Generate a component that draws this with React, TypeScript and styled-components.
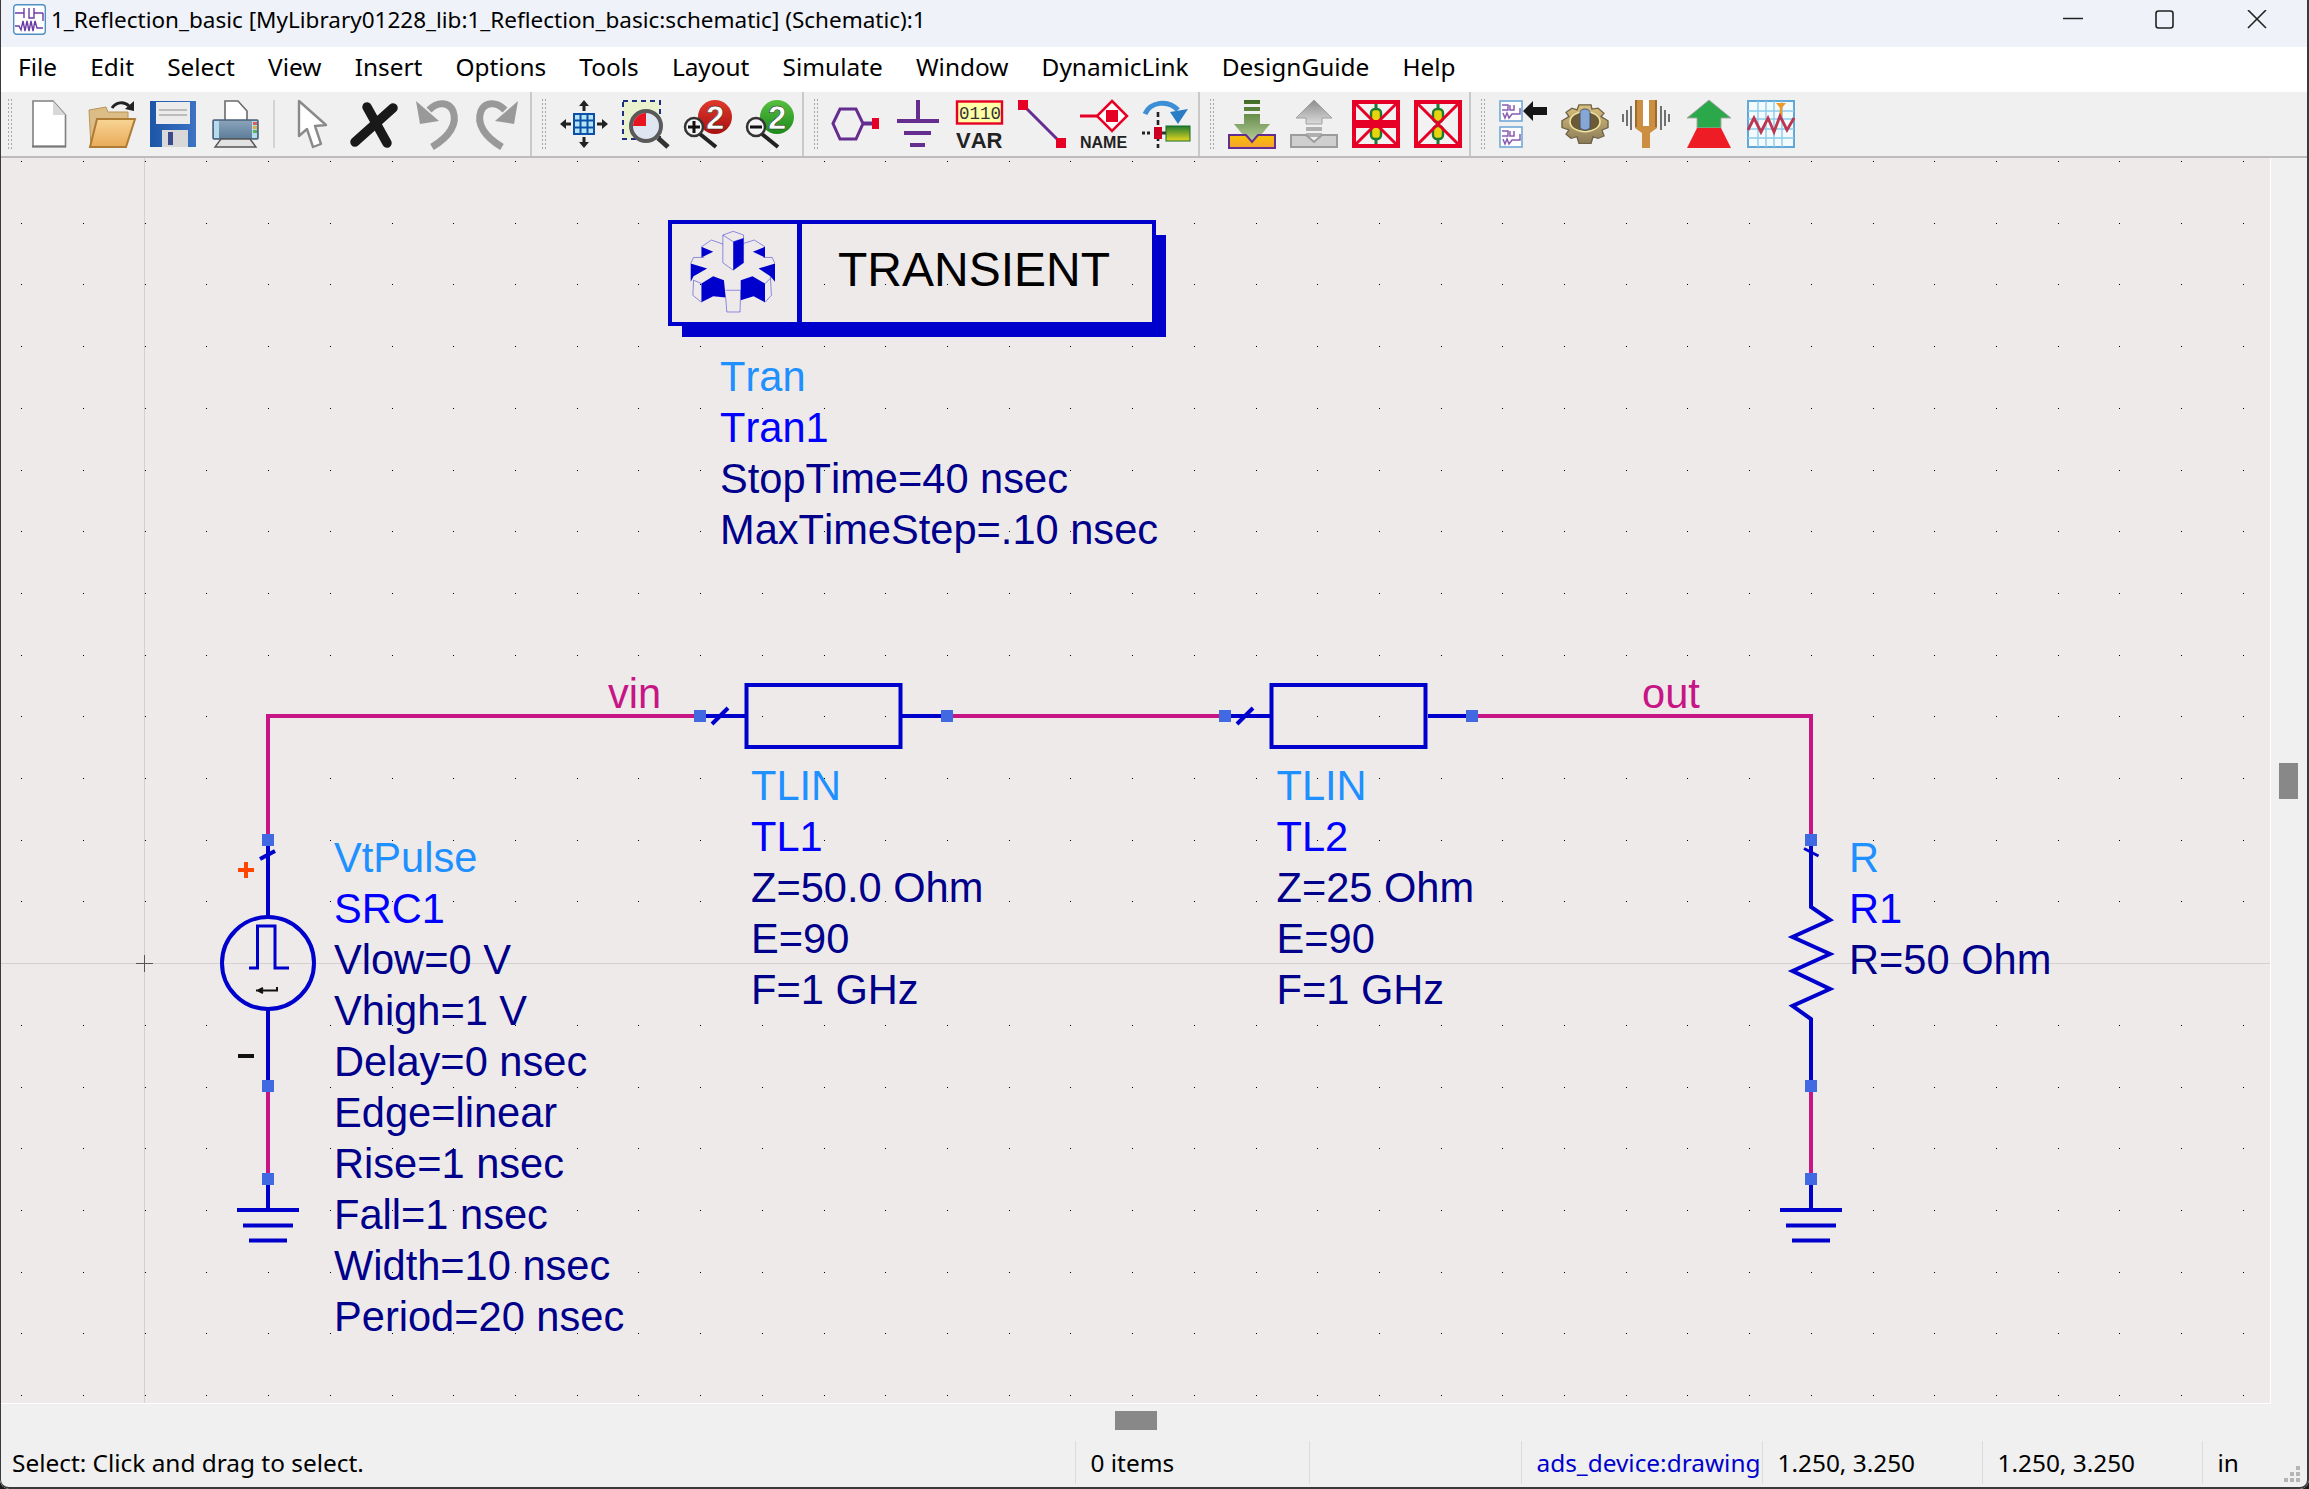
import React from 'react';
import styled, { createGlobalStyle } from 'styled-components';

const GlobalStyle = createGlobalStyle`
  html, body {
    margin: 0;
    padding: 0;
    background: #1c1c1c;
  }
  #root {
    height: 100vh;
  }
`;

const CANVAS_TOP = 158;
const WIRE = '#c71585';
const BLUE = '#0000cd';
const PIN = '#4169e1';
const PURPLE = '#662d91';

const Win = styled.div`
  position: relative;
  display: flex;
  flex-direction: column;
  height: 1489px;
  width: 2309px;
  overflow: hidden;
  background: #f0f0f0;
  border-radius: 0 0 9px 9px;
  font-family: 'Noto Sans', 'Open Sans', sans-serif;
  color: #000;

  &::after {
    content: '';
    position: absolute;
    inset: 0;
    pointer-events: none;
    border: solid #3a3a3a;
    border-width: 0 2px 2px 1px;
    border-radius: 0 0 9px 9px;
  }
`;

const TitleBar = styled.div`
  display: flex;
  align-items: center;
  height: 47px;
  flex: none;
  box-sizing: border-box;
  background: #eff3f9;
  padding: 0 6px 8px 13px;
`;

const TitleText = styled.div`
  margin-left: 5px;
  font-size: 22.5px;
  white-space: nowrap;
`;

const WinButtons = styled.div`
  display: flex;
  margin-left: auto;
`;

const WinButton = styled.div`
  display: flex;
  align-items: center;
  justify-content: center;
  width: 92px;
  height: 36px;
`;

const MenuBar = styled.div`
  display: flex;
  align-items: center;
  height: 44px;
  flex: none;
  box-sizing: border-box;
  padding: 0 0 6px 1.5px;
  background: #fff;
`;

const MenuItem = styled.div`
  padding: 0 16.6px;
  font-size: 24.4px;
`;

const ToolBar = styled.div`
  display: flex;
  flex: none;
  height: 67px;
  box-sizing: border-box;
  border-top: 1px solid #fff;
  border-bottom: 2px solid #bcbcbc;
  background: #f0f0f0;
`;

const ToolSection = styled.div<{ $w: number; $last?: boolean }>`
  display: flex;
  align-items: center;
  width: ${(p) => p.$w}px;
  flex: none;
  box-sizing: border-box;
  border-right: ${(p) => (p.$last ? 'none' : '2px solid #c9c9c9')};
  margin-right: 2px;
  padding-left: 7px;
`;

const Grip = styled.div`
  width: 5px;
  height: 52px;
  margin-right: 14px;
  background-image: radial-gradient(circle, #a8a8a8 0.9px, transparent 1.1px);
  background-size: 3px 4px;
`;

const ToolIcons = styled.div`
  display: flex;
  align-items: center;
  gap: 14px;
`;

const ToolSep = styled.div`
  width: 2px;
  height: 48px;
  margin: 0 -1px;
  background: #d4d4d4;
`;

const Body = styled.div`
  display: flex;
  flex: 1;
  min-height: 0;
`;

const Canvas = styled.div`
  position: relative;
  width: 2271px;
  flex: none;
  box-sizing: border-box;
  overflow: hidden;
  background: #eeeaea;
  border-right: 1px solid #fff;
  border-bottom: 1px solid #fff;
`;

const Schematic = styled.svg`
  position: absolute;
  left: 0;
  top: 0;
`;

const Label = styled.div<{ $x: number; $y: number }>`
  position: absolute;
  left: ${(p) => p.$x}px;
  top: ${(p) => p.$y - CANVAS_TOP}px;
  font-family: 'Liberation Sans', Arial, sans-serif;
  font-size: 41.6px;
  font-kerning: none;
  line-height: 51px;
  white-space: nowrap;
`;

const Line = styled.div<{ $tone?: 'type' | 'name' | 'wire' }>`
  color: ${(p) =>
    p.$tone === 'type'
      ? '#1e90ff'
      : p.$tone === 'name'
        ? '#0000ff'
        : p.$tone === 'wire'
          ? WIRE
          : '#00008b'};
`;

const SimBox = styled.div`
  position: absolute;
  left: 668px;
  top: ${220 - CANVAS_TOP}px;
  width: 488px;
  height: 106px;
  box-sizing: border-box;
  display: flex;
  border: 4px solid ${BLUE};
  box-shadow: 12px 13px 0 -2px ${BLUE};
`;

const SimLogo = styled.div`
  width: 130px;
  flex: none;
  box-sizing: border-box;
  padding: 7px 0 0 18px;
  border-right: 5px solid ${BLUE};
`;

const SimTitle = styled.div`
  padding: 19px 0 0 36px;
  font-family: 'Liberation Sans', Arial, sans-serif;
  font-size: 48px;
  font-kerning: none;
  line-height: 54px;
  color: #000;
`;

const VScroll = styled.div`
  flex: 1;
  padding: ${763 - CANVAS_TOP}px 0 0 8px;
`;

const VThumb = styled.div`
  width: 19px;
  height: 36px;
  background: #888;
`;

const HScroll = styled.div`
  flex: none;
  height: 33px;
  box-sizing: border-box;
  padding: 7px 0 0 1115px;
`;

const HThumb = styled.div`
  width: 42px;
  height: 19px;
  background: #888;
`;

const StatusBar = styled.div`
  display: grid;
  grid-template-columns: 1075px 234px 212px 241px 220px 220px 66px 1fr;
  flex: none;
  height: 52px;
  box-sizing: border-box;
  padding: 4px 0 5px;
  font-size: 24.4px;
`;

const StatusCell = styled.div<{ $link?: boolean; $first?: boolean }>`
  display: flex;
  align-items: center;
  padding-left: ${(p) => (p.$first ? 12 : 14.5)}px;
  white-space: nowrap;
  overflow: hidden;
  color: ${(p) => (p.$link ? BLUE : '#000')};
  border-left: ${(p) => (p.$first ? 'none' : '1px solid #dcdcdc')};
`;

const SizeGrip = styled.svg`
  align-self: end;
  justify-self: end;
  margin-right: 7px;
`;

const IconSvg = styled.svg`
  display: block;
  flex: none;
  overflow: visible;
`;

const Svg48 = ({ children }: { children: React.ReactNode }) => (
  <IconSvg width={48} height={48} viewBox="0 0 48 48">
    {children}
  </IconSvg>
);

const grad = (id: string, a: string, b: string, horizontal = false) => (
  <linearGradient id={id} x1="0" y1="0" x2={horizontal ? 1 : 0} y2={horizontal ? 0 : 1}>
    <stop offset="0" stopColor={a} />
    <stop offset="1" stopColor={b} />
  </linearGradient>
);

const NewDoc = () => (
  <Svg48>
    <path d="M7 1H27L39.5 15V46.5H7Z" fill="#fff" stroke="#808080" strokeWidth="1.6" />
    <path d="M27 1V15H39.5Z" fill="#d8d8d8" />
    <path d="M6 46.5H40" stroke="#777" strokeWidth="2" />
  </Svg48>
);

const OpenFolder = () => (
  <Svg48>
    <defs>{grad('fold', '#f7d596', '#e9ab58')}</defs>
    <path d="M1 10L18 7L20 12H40V20H9L5 47H3Z" fill="#dcbd87" stroke="#b89658" />
    <path d="M9 19H47L38 47H2Z" fill="url(#fold)" stroke="#ad7b33" strokeWidth="2" />
    <path d="M24 8C28 2 36 1 41 6" fill="none" stroke="#222" strokeWidth="3" />
    <path d="M37 9L46 1V11Z" fill="#222" />
  </Svg48>
);

const SaveDisk = () => (
  <Svg48>
    <defs>{grad('disk', '#1c56a6', '#3c73c4', true)}</defs>
    <path d="M0 1H46V47H0Z" fill="url(#disk)" />
    <rect x="6" y="2" width="34" height="22" fill="#ececec" />
    <path d="M9 10H37M9 15H37" stroke="#bcbcbc" strokeWidth="2" />
    <rect x="12" y="30" width="26" height="17" fill="#d8d8d8" />
    <rect x="18" y="32" width="5" height="13" fill="#3a4a8a" />
  </Svg48>
);

const Printer = () => (
  <Svg48>
    <defs>{grad('prn', '#8ba4bb', '#5d7c99')}</defs>
    <path d="M13 1H26L35 11V22H13Z" fill="#fff" stroke="#6a6a6a" strokeWidth="1.6" />
    <rect x="1" y="20" width="45" height="19" rx="1" fill="url(#prn)" stroke="#4a6278" strokeWidth="1.5" />
    <rect x="2" y="21" width="5" height="17" fill="#b5dcee" />
    <rect x="40" y="21" width="5" height="17" fill="#b5dcee" />
    <rect x="41" y="22" width="4" height="3" fill="#e25b5b" />
    <rect x="41" y="26" width="4" height="3" fill="#e0b040" />
    <rect x="41" y="30" width="4" height="3" fill="#5db35d" />
    <path d="M9 39H38L44 47H3Z" fill="#e2e2e2" stroke="#555" strokeWidth="1.4" />
  </Svg48>
);

const Pointer = () => (
  <Svg48>
    <path d="M11 1V36L19 29L25 47L33 44L27 26L38 25Z" fill="#fff" stroke="#8a8a8a" strokeWidth="2.4" strokeLinejoin="round" />
  </Svg48>
);

const DeleteX = () => (
  <Svg48>
    <path d="M5 42L43 8M17 7L37 43" fill="none" stroke="#191919" strokeWidth="9.5" strokeLinecap="round" />
  </Svg48>
);

const Undo = ({ flip }: { flip?: boolean }) => (
  <Svg48>
    <g transform={flip ? 'matrix(-1 0 0 1 48 0)' : undefined}>
      <path d="M20 47C37 37 46 24 41 11C37 2 26 1 17 10" fill="none" stroke="#999" strokeWidth="7" />
      <path d="M4 1L8 24L27 21Z" fill="#999" />
    </g>
  </Svg48>
);

const ZoomFit = () => (
  <Svg48>
    <rect x="14" y="14" width="20" height="20" fill="#b4e4f6" stroke="#0a50a8" strokeWidth="2" />
    <path d="M20.5 14V34M27.5 14V34M14 20.5H34M14 27.5H34" stroke="#0a50a8" strokeWidth="2" />
    <path d="M24 3V11M24 37V45M3 24H11M37 24H45" stroke="#222" strokeWidth="3" />
    <path d="M19 6H29L24 0ZM19 42H29L24 48ZM6 19V29L0 24ZM42 19V29L48 24Z" fill="#222" />
  </Svg48>
);

const ZoomArea = () => (
  <Svg48>
    <rect x="1" y="1" width="37" height="38" fill="#eaf2cd" stroke="#1c2f80" strokeWidth="2" strokeDasharray="5 4" />
    <circle cx="24" cy="26" r="15" fill="#dfe6f2" stroke="#5a5a5a" strokeWidth="4" />
    <path d="M24 26H11A13 13 0 0 1 24 13Z" fill="#e8141f" />
    <path d="M36 38L46 47" stroke="#333" strokeWidth="5" />
  </Svg48>
);

const TwoGlyph = styled.text`
  font-family: 'Liberation Sans', Arial, sans-serif;
  font-weight: 700;
  font-size: 33px;
  fill: #fff;
  stroke: #222;
  stroke-width: 0.5px;
`;

const ZoomTwo = ({ id, ball, edge, minus }: { id: string; ball: string; edge: string; minus?: boolean }) => (
  <Svg48>
    <defs>{grad(id, ball, edge)}</defs>
    <circle cx="31" cy="17" r="17" fill={`url(#${id})`} />
    <TwoGlyph x="22" y="29">2</TwoGlyph>
    <path d="M16 34L32 47" stroke="#222" strokeWidth="4" />
    <circle cx="10" cy="27" r="9" fill="#f4f4f4" stroke="#333" strokeWidth="2.5" />
    <path d={minus ? 'M4 27H16' : 'M4 27H16M10 21V33'} stroke="#111" strokeWidth="3" />
  </Svg48>
);

const Port = () => (
  <Svg48>
    <path d="M1 23.5L8 9H24L31 23.5L24 39H8Z" fill="none" stroke={PURPLE} strokeWidth="3" />
    <path d="M31 23.5H41" stroke={PURPLE} strokeWidth="4" />
    <rect x="40" y="18" width="7" height="11" fill="#e60026" />
  </Svg48>
);

const Gnd = () => (
  <Svg48>
    <path d="M24 0V21M3 21H45M10 33H37M16 45H31" stroke={PURPLE} strokeWidth="4" />
  </Svg48>
);

const VarCode = styled.text`
  font-family: 'Liberation Mono', monospace;
  font-size: 17.5px;
  fill: #333;
`;

const IconCaption = styled.text<{ $size: number }>`
  font-family: 'Liberation Sans', Arial, sans-serif;
  font-weight: 700;
  font-kerning: none;
  font-size: ${(p) => p.$size}px;
  fill: #222;
`;

const VarIcon = () => (
  <Svg48>
    <rect x="1" y="1.5" width="45" height="22" fill="#ffffa6" stroke="#e60026" strokeWidth="2.4" />
    <VarCode x="3" y="18.500">0110</VarCode>
    <IconCaption $size={22} x="0" y="47.500">VAR</IconCaption>
  </Svg48>
);

const WireIcon = () => (
  <Svg48>
    <path d="M5 5L43 43" stroke={PURPLE} strokeWidth="3" />
    <rect x="0" y="0" width="10" height="10" fill="#e60026" />
    <rect x="38" y="38" width="10" height="10" fill="#e60026" />
  </Svg48>
);

const NameIcon = () => (
  <Svg48>
    <path d="M0 16H18" stroke="#e60026" strokeWidth="3" />
    <path d="M32 1L47 16L32 31L17 16Z" fill="#fdfdfd" stroke="#e60026" strokeWidth="2.5" />
    <rect x="26" y="10" width="12" height="12" fill="#e60026" />
    <IconCaption $size={16} x="0" y="47.500">NAME</IconCaption>
  </Svg48>
);

const SwapIcon = () => (
  <Svg48>
    <path d="M3 14C8 2 26 -1 36 10" fill="none" stroke="#3c8fd4" strokeWidth="5" />
    <path d="M28 12L46 9L36 24Z" fill="#2a7cc4" />
    <path d="M16 12V48" stroke="#222" strokeWidth="2.6" strokeDasharray="5 3" />
    <path d="M0 33H8" stroke="#222" strokeWidth="3" strokeDasharray="3 2" />
    <rect x="12" y="27" width="8" height="12" fill="#cc0022" />
    <defs>{grad('swapg', '#1f7a30', '#e8d820')}</defs>
    <path d="M20 33H25" stroke="#333" strokeWidth="3" />
    <rect x="24" y="26" width="24" height="15" fill="url(#swapg)" stroke="#156b28" />
  </Svg48>
);

const PushDown = () => (
  <Svg48>
    <defs>
      {grad('push', '#3d6b22', '#c4d8a8')}
      {grad('tray', '#f6c400', '#f8a030')}
    </defs>
    <path d="M16 0H32V4H16ZM16 7H32V11H16ZM16 14H32V24H42L24 46L6 24H16Z" fill="url(#push)" />
    <path d="M1 35H18L24 42L30 35H47V48H1Z" fill="url(#tray)" stroke={PURPLE} strokeWidth="2" />
  </Svg48>
);

const PopUp = () => (
  <Svg48>
    <defs>{grad('pop', '#8d8d8d', '#dadada')}</defs>
    <path d="M24 0L42 18H32V24H16V18H6Z" fill="url(#pop)" stroke="#a0a0a0" />
    <path d="M16 27H32V31H16ZM16 33H32V37H16Z" fill="#b0b0b0" />
    <path d="M1 35H16L24 42L32 35H47V47H1Z" fill="#cfcfcf" stroke="#9c9c9c" strokeWidth="2" />
  </Svg48>
);

const Deact = ({ band }: { band?: boolean }) => (
  <Svg48>
    <rect x="2" y="2" width="44" height="44" fill="#f2f2f2" stroke="#e60026" strokeWidth="4" />
    <path d="M24 4V44" stroke="#1c7a30" strokeWidth="3" />
    <rect x="19" y="9" width="10" height="13" rx="4" fill="#e6d410" stroke="#1c7a30" strokeWidth="2.4" />
    <rect x="19" y="26" width="10" height="13" rx="4" fill="#e6d410" stroke="#1c7a30" strokeWidth="2.4" />
    <path d="M3 3L45 45M45 3L3 45" stroke="#e60026" strokeWidth="3" />
    {band && <rect x="2" y="20" width="44" height="8" fill="#e60026" />}
  </Svg48>
);

const MiniSheet = ({ y }: { y: number }) => (
  <g transform={`translate(0 ${y})`}>
    <rect x="1" y="1" width="22" height="20" fill="#fff" stroke="#72a8d8" strokeWidth="1.6" />
    <path d="M3 5H9V10H3M11 5V10H15V5M21 8V14H13L10 18L8 13L6 18L4 13" fill="none" stroke="#8a5cb0" strokeWidth="1.5" />
  </g>
);

const ArrowSheets = () => (
  <Svg48>
    <MiniSheet y={0} />
    <MiniSheet y={26} />
    <path d="M24 11L34 1V7H48V15H34V21Z" fill="#161616" />
  </Svg48>
);

const GearIcon = () => (
  <Svg48>
    <defs>{grad('gear', '#dcc27c', '#8a7a58')}</defs>
    <g transform="translate(0 4) scale(1 0.84)">
      <path
        d="M18 1H30L31 6L37 5L43 11L40 15L47 20V28L41 31L43 38L37 41L32 39L30 47H18L16 39L10 41L5 36L8 31L1 28V20L8 15L5 10L11 5L16 7Z"
        fill="url(#gear)"
        stroke="#6e6248"
        strokeWidth="1.4"
      />
      <ellipse cx="24" cy="21" rx="15" ry="12" fill="#6c5a36" stroke="#efe6a4" strokeWidth="1.6" />
      <rect x="19" y="6" width="10" height="25" rx="4.500" fill="#86a6d4" stroke="#3e4f72" />
    </g>
  </Svg48>
);

const Fork = () => (
  <Svg48>
    <path d="M12 0H20V26H26V0H34V28L27 33V48H19V33L12 28Z" fill="#cc8f42" />
    <path d="M20 0H26V26H20Z" fill="#fff" />
    <path d="M13 0V27M33 0V27" stroke="#8c5a22" strokeWidth="1.4" />
    <path d="M8 6V30M4 10V26M0 14V22M38 6V30M42 10V26M46 14V22" stroke="#707070" strokeWidth="2" />
  </Svg48>
);

const UpArrow = () => (
  <Svg48>
    <path d="M24 0L46 18H36V28H12V18H2Z" fill="#2ba84a" stroke="#a8a8a8" strokeWidth="1" />
    <path d="M12 28H36L46 48H2Z" fill="#ee1c25" />
  </Svg48>
);

const Graph = () => (
  <Svg48>
    <rect x="1" y="1" width="46" height="46" fill="#f3fafd" stroke="#62a8d6" strokeWidth="2" />
    <path d="M11 1V47M19 1V47M27 1V47M35 1V47M1 11H47M1 19H47M1 29H47M1 38H47" stroke="#8ccbe9" strokeWidth="1.4" />
    <path d="M34 3V16" stroke="#f09a28" strokeWidth="2.5" />
    <path d="M29 3H39L34 9Z" fill="#f09a28" />
    <path d="M1 30L7 18L14 32L21 18L27 32L33 16L40 30L47 18" fill="none" stroke="#bc3650" strokeWidth="2.8" />
  </Svg48>
);

const AppIcon = () => (
  <svg width="33" height="31" viewBox="0 0 33 31">
    <rect x="0.7" y="0.7" width="31.6" height="29.6" rx="3" fill="#fff" stroke="#4f8fc4" strokeWidth="1.4" />
    <path
      d="M2 9H11M11 4V14M16 4V14H21V4M21 9H30M2 22H6L8 26L10 17L12 27L14 17L16 27L18 17L20 27L22 17L24 24H30M30 9V17"
      fill="none"
      stroke="#6d3ba6"
      strokeWidth="1.4"
    />
  </svg>
);

// grid dots sit on single pixels, a <pattern> would smear them with the fractional pitch
const gridDots = () => {
  let d = '';
  for (let i = 0; i < 37; i++) {
    for (let j = 0; j < 21; j++) {
      d += `M${Math.round(21.3 + i * 61.71)} ${Math.round(161 + j * 61.7)}h1v1h-1z`;
    }
  }
  return d;
};

const Pin = ({ x, y }: { x: number; y: number }) => <rect x={x - 6} y={y - 6} width={12} height={12} fill={PIN} />;

const Ground = ({ x }: { x: number }) => (
  <path
    d={`M${x - 31} 1210H${x + 31}M${x - 25} 1225.5H${x + 25}M${x - 19} 1240.5H${x + 19}`}
    stroke={BLUE}
    strokeWidth="4"
    fill="none"
  />
);

const GearLogo = () => (
  <svg width="85" height="82" viewBox="140 93 238 245" preserveAspectRatio="none">
    <g fill="none" stroke={BLUE} strokeWidth="1.2" vectorEffect="non-scaling-stroke">
      <path d="M232 105L261 94L290 105V188L261 210L232 188Z" />
      <path d="M232 105L261 125L290 115" />
      <path d="M172 140L200 120L232 132M290 130L320 120L350 140" />
      <path d="M142 190L150 172H180M345 172H370L378 190" />
      <path d="M150 240L148 285L172 306M365 228L368 285L350 306" />
      <path d="M240 270H282L280 335H243L240 292" />
      <path d="M150 240L172 250M350 250L365 235" />
    </g>
    <g fill={BLUE}>
      <path d="M261 125L290 115V188L261 210Z" />
      <path d="M172 140L205 155L172 172ZM350 140L316 155L350 172Z" />
      <path d="M142 190L188 205L150 228L142 245ZM378 190L332 205L365 228L378 245Z" />
      <path d="M172 250L205 228L235 240L240 292L205 288L172 306Z" />
      <path d="M282 240L315 228L350 250V306L318 288L282 300Z" />
    </g>
  </svg>
);

const menus = ['File', 'Edit', 'Select', 'View', 'Insert', 'Options', 'Tools', 'Layout', 'Simulate', 'Window', 'DynamicLink', 'DesignGuide', 'Help'];

const blocks = [
  { x: 720, y: 351, lines: ['Tran', 'Tran1', 'StopTime=40 nsec', 'MaxTimeStep=.10 nsec'] },
  { x: 751, y: 760, lines: ['TLIN', 'TL1', 'Z=50.0 Ohm', 'E=90', 'F=1 GHz'] },
  { x: 1276.5, y: 760, lines: ['TLIN', 'TL2', 'Z=25 Ohm', 'E=90', 'F=1 GHz'] },
  { x: 334, y: 832, lines: ['VtPulse', 'SRC1', 'Vlow=0 V', 'Vhigh=1 V', 'Delay=0 nsec', 'Edge=linear', 'Rise=1 nsec', 'Fall=1 nsec', 'Width=10 nsec', 'Period=20 nsec'] },
  { x: 1849, y: 832, lines: ['R', 'R1', 'R=50 Ohm'] },
];

const lineTone = (i: number) => (i === 0 ? 'type' : i === 1 ? 'name' : undefined);

export default function App() {
  return (
    <>
      <GlobalStyle />
      <Win>
        <TitleBar>
          <AppIcon />
          <TitleText>1_Reflection_basic [MyLibrary01228_lib:1_Reflection_basic:schematic] (Schematic):1</TitleText>
          <WinButtons>
            <WinButton>
              <svg width="20" height="20" viewBox="0 0 20 20">
                <path d="M0 8.5H20" stroke="#222" strokeWidth="1.5" />
              </svg>
            </WinButton>
            <WinButton>
              <svg width="20" height="20" viewBox="0 0 20 20">
                <rect x="1" y="1" width="17" height="17" rx="2.5" fill="none" stroke="#222" strokeWidth="1.6" />
              </svg>
            </WinButton>
            <WinButton>
              <svg width="20" height="20" viewBox="0 0 20 20">
                <path d="M1 0L19 18M19 0L1 18" stroke="#222" strokeWidth="1.6" />
              </svg>
            </WinButton>
          </WinButtons>
        </TitleBar>

        <MenuBar>
          {menus.map((m) => (
            <MenuItem key={m}>{m}</MenuItem>
          ))}
        </MenuBar>

        <ToolBar>
          <ToolSection $w={532}>
            <Grip />
            <ToolIcons>
              <NewDoc />
              <OpenFolder />
              <SaveDisk />
              <Printer />
              <ToolSep />
              <Pointer />
              <DeleteX />
              <Undo />
              <Undo flip />
            </ToolIcons>
          </ToolSection>
          <ToolSection $w={270}>
            <Grip />
            <ToolIcons>
              <ZoomFit />
              <ZoomArea />
              <ZoomTwo id="zr" ball="#e03a2c" edge="#a81010" />
              <ZoomTwo id="zg" ball="#58c040" edge="#1c8a1c" minus />
            </ToolIcons>
          </ToolSection>
          <ToolSection $w={394}>
            <Grip />
            <ToolIcons>
              <Port />
              <Gnd />
              <VarIcon />
              <WireIcon />
              <NameIcon />
              <SwapIcon />
            </ToolIcons>
          </ToolSection>
          <ToolSection $w={269}>
            <Grip />
            <ToolIcons>
              <PushDown />
              <PopUp />
              <Deact band />
              <Deact />
            </ToolIcons>
          </ToolSection>
          <ToolSection $w={800} $last>
            <Grip />
            <ToolIcons>
              <ArrowSheets />
              <GearIcon />
              <Fork />
              <UpArrow />
              <Graph />
            </ToolIcons>
          </ToolSection>
        </ToolBar>

        <Body>
          <Canvas>
            <Schematic width="2270" height="1245" viewBox={`0 ${CANVAS_TOP} 2270 1245`}>
              <path d={gridDots()} fill="#000" shapeRendering="crispEdges" />
              <path d="M0 963.5H2270M144.5 158V1403" stroke="#d2d0d0" strokeWidth="1" shapeRendering="crispEdges" />
              <path d="M136 963.5H153M144.5 955V972" stroke="#555" strokeWidth="1" shapeRendering="crispEdges" />

              <g fill="none" stroke={WIRE} strokeWidth="4">
                <path d="M268 840V716H700" />
                <path d="M947 716H1225" />
                <path d="M1472 716H1811V840" />
                <path d="M268 1086V1179" />
                <path d="M1811 1086V1179" />
              </g>

              <g fill="none" stroke={BLUE} strokeWidth="4">
                <path d="M700 716H746M902 716H947M1225 716H1271M1428 716H1472" />
                <path d="M712 724L728 708M1237 724L1253 708" />
                <rect x="746.5" y="685" width="154" height="62" />
                <rect x="1271.5" y="685" width="154" height="62" />

                <path d="M268 840V917M268 1009V1086M268 1179V1210" />
                <path d="M260 859L275 851" />
                <circle cx="268" cy="963" r="46" />
                <path d="M249 968H257.500V926H275V968H289" strokeWidth="3" />

                <path d="M1811 840V907L1830 920L1792.500 937L1830 954L1792.500 971L1830 989L1792.500 1006L1811 1019V1086M1811 1179V1210" />
                <path d="M1804 848.500L1818.500 856" strokeWidth="3" />
              </g>
              <path d="M256 990.500H277V987M263 988L258 990.500L263 993" fill="none" stroke="#111" strokeWidth="2" />

              <Ground x={268} />
              <Ground x={1811} />

              <Pin x={700} y={716} />
              <Pin x={947} y={716} />
              <Pin x={1225} y={716} />
              <Pin x={1472} y={716} />
              <Pin x={268} y={840} />
              <Pin x={268} y={1086} />
              <Pin x={268} y={1179} />
              <Pin x={1811} y={840} />
              <Pin x={1811} y={1086} />
              <Pin x={1811} y={1179} />

              <path d="M238 870H254M246 862V878" stroke="#ff4500" strokeWidth="4" />
              <path d="M238 1056H254" stroke="#111" strokeWidth="4" />
            </Schematic>

            <SimBox>
              <SimLogo>
                <GearLogo />
              </SimLogo>
              <SimTitle>TRANSIENT</SimTitle>
            </SimBox>

            {blocks.map((b) => (
              <Label key={`${b.x}-${b.y}`} $x={b.x} $y={b.y}>
                {b.lines.map((l, i) => (
                  <Line key={l + i} $tone={lineTone(i)}>
                    {l}
                  </Line>
                ))}
              </Label>
            ))}
            <Label $x={608} $y={668}>
              <Line $tone="wire">vin</Line>
            </Label>
            <Label $x={1642} $y={668}>
              <Line $tone="wire">out</Line>
            </Label>
          </Canvas>
          <VScroll>
            <VThumb />
          </VScroll>
        </Body>

        <HScroll>
          <HThumb />
        </HScroll>

        <StatusBar>
          <StatusCell $first>Select: Click and drag to select.</StatusCell>
          <StatusCell>0 items</StatusCell>
          <StatusCell />
          <StatusCell $link>ads_device:drawing</StatusCell>
          <StatusCell>1.250, 3.250</StatusCell>
          <StatusCell>1.250, 3.250</StatusCell>
          <StatusCell>in</StatusCell>
          <SizeGrip width="20" height="20" viewBox="0 0 20 20">
            <path d="M14 2h4v4h-4zM8 8h4v4H8zM14 8h4v4h-4zM2 14h4v4H2zM8 14h4v4H8zM14 14h4v4h-4z" fill="#b5b5b5" />
          </SizeGrip>
        </StatusBar>
      </Win>
    </>
  );
}
